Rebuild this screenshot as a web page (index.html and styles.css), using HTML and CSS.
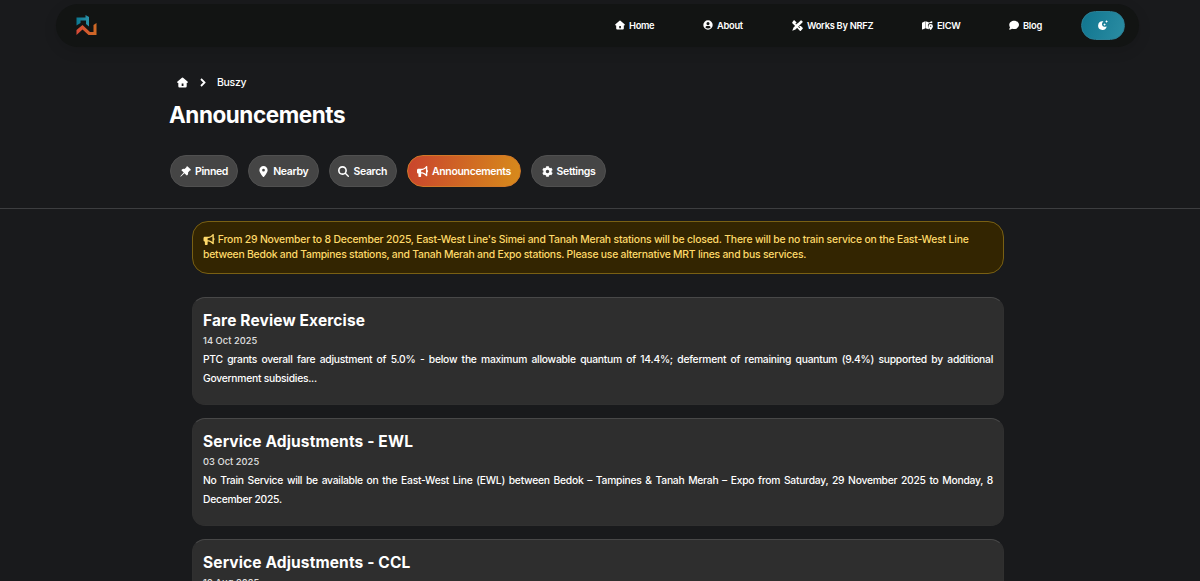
FILE: index.html
```
<!DOCTYPE html>
<html lang="en">
<head>
    <meta charset="UTF-8">
    <meta name="viewport" content="width=device-width, initial-scale=1.0">
    <title>Announcements - Buszy</title>
    <link rel="stylesheet" href="styles.css">
</head>
<body>
    <svg class="sprite" aria-hidden="true">
        <symbol id="home" viewBox="0 0 16 16"><path fill-rule="evenodd" d="M7.2 1.2a1.3 1.3 0 0 1 1.6 0l6.5 5.5c.9.8.4 1.9-.7 1.9h-.5v5a1.7 1.7 0 0 1-1.7 1.7H3.6a1.7 1.7 0 0 1-1.7-1.7v-5h-.5C.3 8.6-.2 7.5.7 6.7zM6.8 9.5V13h2.6V9.5z"/></symbol>
        <symbol id="user" viewBox="0 0 16 16"><path fill-rule="evenodd" d="M8 .5a7.5 7.5 0 1 0 0 15 7.5 7.5 0 0 0 0-15zM8 3.2a2.5 2.5 0 1 1 0 5 2.5 2.5 0 0 1 0-5zM3.7 11.5c.6-1.3 1.7-2 3.1-2h2.4c1.4 0 2.5.7 3.1 2A5.7 5.7 0 0 1 8 13.4a5.7 5.7 0 0 1-4.3-1.9z"/></symbol>
        <symbol id="works" viewBox="0 0 16 16"><path d="M3.5.4 6.7 3.6 4.9 5.4l1 1 1.8-1.8.9.9L5 9.1.5 4.6c-.5-.5-.5-1 0-1.5L2.6.4q.4-.4.9 0zM12.6.6q.6-.5 1.2 0l1.6 1.6q.5.6 0 1.2L5.1 13.7.4 15.5l1.8-4.6zM11 6.9l4.5 4.5c.5.5.5 1 0 1.5l-2.6 2.6c-.5.5-1 .5-1.5 0L7.3 11.3l1.5-1.5 2 2 1-1-2-2z"/></symbol>
        <symbol id="map" viewBox="0 0 18 16"><path fill-rule="evenodd" d="M0 3.3 5 1.2v11.6L.7 14.7q-.7.2-.7-.5zM5.6 1.2l5.6 1.5v2.1q-2.2 1.7-1.5 4.6l1.5 2.5v2.3l-5.6-1.5zM11.8 2.7l4.3-1.5q.7-.2.7.5v2.6q-2.1-1-5 .1zM14.2 5.4a3.7 3.7 0 0 1 3.7 3.7c0 2-2.4 4.9-3.2 6q-.5.6-1 0c-.8-1.1-3.2-4-3.2-6a3.7 3.7 0 0 1 3.7-3.7zm0 2.7a1 1 0 1 0 0 2 1 1 0 0 0 0-2z"/></symbol>
        <symbol id="chat" viewBox="0 0 16 16"><path d="M8.2 1C12.5 1 16 3.9 16 7.7s-3.5 6.7-7.8 6.7c-1.2 0-2.3-.2-3.3-.6-1 .8-2.7 1.4-4.4 1.4-.5 0-.6-.5-.3-.8.7-.8 1.3-1.9 1.4-2.8A6.2 6.2 0 0 1 .4 7.7C.4 3.9 3.9 1 8.2 1z"/></symbol>
        <symbol id="moon" viewBox="0 0 16 16"><path d="M8.3 2.6C6.3 4 5.8 6.6 7 8.7c1.4 2.3 4.2 2.8 6.2 1.8.4-.2.7.2.5.6a6.9 6.9 0 1 1-6-9c.7 0 1 .3.6.5zM10.5 5l.7 1.5 1.5.7-1.5.7-.7 1.5-.7-1.5-1.5-.7 1.5-.7zM13.7 0l.7 1.6 1.6.7-1.6.7-.7 1.6-.7-1.6-1.6-.7 1.6-.7z"/></symbol>
        <symbol id="pin" viewBox="0 0 16 16"><path d="M9.6.7q.7-.9 1.5-.1l4.3 4.3q.8.8-.1 1.5l-1 .3-2.6 2.6c.4 1.6 0 3.1-1.2 4.3q-.5.4-1 0L6.4 10.5l-4.6 4.4-1.6.9.9-1.6 4.4-4.6-3.1-3.1q-.4-.5 0-1C3.6 4.3 5.1 3.9 6.7 4.3l2.6-2.6z"/></symbol>
        <symbol id="location" viewBox="0 0 384 512"><path d="M215.7 499.2C267 435 384 279.4 384 192C384 86 298 0 192 0S0 86 0 192c0 87.4 117 243 168.3 307.2c12.3 15.3 35.1 15.3 47.4 0zM192 128a64 64 0 1 1 0 128 64 64 0 1 1 0-128z"/></symbol>
        <symbol id="search" viewBox="0 0 512 512"><path d="M416 208c0 45.9-14.9 88.3-40 122.7L502.6 457.4c12.5 12.5 12.5 32.8 0 45.3s-32.8 12.5-45.3 0L330.7 376c-34.4 25.2-76.8 40-122.7 40C93.1 416 0 322.9 0 208S93.1 0 208 0S416 93.1 416 208zM208 340a132 132 0 1 0 0-264 132 132 0 1 0 0 264z"/></symbol>
        <symbol id="bullhorn" viewBox="0 0 512 512"><path d="M480 32c0-12.9-7.8-24.6-19.8-29.6s-25.7-2.2-34.9 6.9L381.7 53c-48 48-113.1 75-181 75H64c-35.3 0-64 28.7-64 64v96c0 35.3 28.7 64 64 64v128c0 17.7 14.3 32 32 32h64c17.7 0 32-14.3 32-32V352h8.7c67.9 0 133 27 181 75l43.6 43.6c9.2 9.2 22.9 11.9 34.9 6.9s19.8-16.6 19.8-29.6V300.4c18.6-8.8 32-32.5 32-60.4s-13.4-51.6-32-60.4V32zm-64 76.7v262.6C357.2 317.8 280.5 288 200.7 288H192V192h8.7c79.8 0 156.5-29.8 215.3-83.3z"/></symbol>
        <symbol id="gear" viewBox="0 0 512 512"><path d="M487.4 315.7l-42.6-24.6c4.3-23.2 4.3-47 0-70.2l42.6-24.6c4.9-2.8 7.1-8.6 5.5-14-11.1-35.6-30-67.8-54.7-94.6-3.8-4.1-10-5.1-14.8-2.3L380.8 110c-17.9-15.4-38.5-27.3-60.8-35.1V25.8c0-5.6-3.9-10.5-9.4-11.7-36.7-8.2-74.3-7.8-109.2 0-5.5 1.2-9.4 6.1-9.4 11.7V75c-22.2 7.9-42.8 19.8-60.8 35.1L88.7 85.5c-4.9-2.8-11-1.9-14.8 2.3-24.7 26.7-43.6 58.9-54.7 94.6-1.7 5.4.6 11.2 5.5 14L67.3 221c-4.3 23.2-4.3 47 0 70.2l-42.6 24.6c-4.9 2.8-7.1 8.6-5.5 14 11.1 35.6 30 67.8 54.7 94.6 3.8 4.1 10 5.1 14.8 2.3l42.6-24.6c17.9 15.4 38.5 27.3 60.8 35.1v49.2c0 5.6 3.9 10.5 9.4 11.7 36.7 8.2 74.3 7.8 109.2 0 5.5-1.2 9.4-6.1 9.4-11.7v-49.2c22.2-7.9 42.8-19.8 60.8-35.1l42.6 24.6c4.9 2.8 11 1.9 14.8-2.3 24.7-26.7 43.6-58.9 54.7-94.6 1.5-5.5-.7-11.3-5.6-14.1zM256 336c-44.1 0-80-35.9-80-80s35.9-80 80-80 80 35.9 80 80-35.9 80-80 80z"/></symbol>
    </svg>

    <nav class="navbar">
        <a class="brand" href="#">
            <svg class="logo" viewBox="0 0 20 21">
                <defs>
                    <linearGradient id="blue"><stop stop-color="#0b7891"/><stop offset="1" stop-color="#2b91a8"/></linearGradient>
                    <linearGradient id="orange"><stop stop-color="#d84a38"/><stop offset="1" stop-color="#cd6a24"/></linearGradient>
                </defs>
                <path fill="url(#blue)" d="M0 10.5v-8h9V0l3.5 2v9.500L9.500 9V5.500H4v2.500z"/>
                <path fill="url(#orange)" d="M0 15l6-5 7.500 7H17v-7l3-2v12h-8l-6-5.500L0 20z"/>
            </svg>
        </a>
        <div class="nav-links">
            <a class="nav-link home-link" href="#"><svg class="icon"><use href="#home"/></svg>Home</a>
            <a class="nav-link about-link" href="#"><svg class="icon"><use href="#user"/></svg>About</a>
            <a class="nav-link works-link" href="#"><svg class="icon"><use href="#works"/></svg>Works By NRFZ</a>
            <a class="nav-link eicw-link" href="#"><svg class="icon"><use href="#map"/></svg>EICW</a>
            <a class="nav-link blog-link" href="#"><svg class="icon"><use href="#chat"/></svg>Blog</a>
            <button class="theme-btn" aria-label="Theme"><svg class="icon"><use href="#moon"/></svg></button>
        </div>
    </nav>

    <header class="page-header">
        <div class="breadcrumb">
            <svg class="icon"><use href="#home"/></svg>
            <svg class="chevron" viewBox="0 0 6 9"><path d="M1 1l3.5 3.5L1 8"/></svg>
            <span>Buszy</span>
        </div>
        <h1>Announcements</h1>
        <div class="tabs">
            <button class="tab pinned"><svg class="icon"><use href="#pin"/></svg><span>Pinned</span></button>
            <button class="tab nearby"><svg class="icon"><use href="#location"/></svg><span>Nearby</span></button>
            <button class="tab search"><svg class="icon"><use href="#search"/></svg><span>Search</span></button>
            <button class="tab news active"><svg class="icon"><use href="#bullhorn"/></svg><span>Announcements</span></button>
            <button class="tab settings"><svg class="icon"><use href="#gear"/></svg><span>Settings</span></button>
        </div>
    </header>

    <main class="content">
        <div class="alert">
            <svg class="icon"><use href="#bullhorn"/></svg>
            <span class="line-one">From 29 November to 8 December 2025, East-West Line's Simei and Tanah Merah stations will be closed. There will be no train service on the East-West Line</span><br>
            <span class="line-two">between Bedok and Tampines stations, and Tanah Merah and Expo stations. Please use alternative MRT lines and bus services.</span>
        </div>
        <article class="card">
            <h2>Fare Review Exercise</h2>
            <time>14 Oct 2025</time>
            <p>PTC grants overall fare adjustment of 5.0% - below the maximum allowable quantum of 14.4%; deferment of remaining quantum (9.4%) supported by additional Government subsidies...</p>
        </article>
        <article class="card">
            <h2>Service Adjustments - EWL</h2>
            <time>03 Oct 2025</time>
            <p>No Train Service will be available on the East-West Line (EWL) between Bedok – Tampines &amp; Tanah Merah – Expo from Saturday, 29 November 2025 to Monday, 8 December 2025.</p>
        </article>
        <article class="card">
            <h2>Service Adjustments - CCL</h2>
            <time>19 Aug 2025</time>
        </article>
    </main>
</body>
</html>
```
FILE: styles.css
```
* {
    box-sizing: border-box;
}
body {
    margin: 0;
    height: 581px;
    overflow: hidden;
    background: #191a1c;
    color: #fff;
    font-family: Inter, "Liberation Sans", sans-serif;
}
.sprite {
    display: none;
}
.icon {
    width: 10px;
    height: 10px;
    fill: currentColor;
    flex: none;
}
.navbar {
    display: flex;
    align-items: center;
    justify-content: space-between;
    width: 1083px;
    height: 43px;
    margin: 4px 0 0 56px;
    padding: 0 14px 1px 20px;
    border-radius: 22px;
    background: #121413;
    box-shadow: 0 4px 14px rgba(0,0,0,0.12);
}
.brand {
    display: flex;
}
.logo {
    width: 21px;
    height: 21px;
}
.nav-links {
    display: flex;
    align-items: center;
}
.nav-link {
    display: flex;
    align-items: center;
    gap: 4px;
    color: #fff;
    font-size: 9.3px;
    font-weight: 600;
    letter-spacing: -0.28px;
    text-decoration: none;
    white-space: nowrap;
}
.home-link {
    width: 88px;
}
.about-link {
    width: 89px;
}
.works-link {
    width: 130px;
}
.eicw-link {
    width: 87px;
}
.works-link .icon,
.eicw-link .icon {
    width: 11px;
    height: 11px;
}
.blog-link {
    width: 72px;
}
.theme-btn {
    display: flex;
    align-items: center;
    justify-content: center;
    width: 44px;
    height: 29px;
    padding: 0;
    border: 1px solid #2b8096;
    border-radius: 15px;
    color: #fff;
    background: linear-gradient(110deg, #10758f, #2b8da3);
}
.page-header {
    height: 162px;
    padding: 29px 0 0 170px;
    border-bottom: 1px solid #3d3e40;
}
.breadcrumb {
    display: flex;
    align-items: center;
    height: 13px;
    padding-left: 7px;
    font-size: 10.5px;
    font-weight: 500;
    letter-spacing: -0.3px;
}
.breadcrumb .icon {
    width: 11px;
    height: 11px;
}
.chevron {
    width: 6px;
    height: 9px;
    margin: 0 11px 0 12px;
    fill: none;
    stroke: #fff;
    stroke-width: 1.8;
}
h1 {
    margin: 12px 0 0 -1px;
    font-size: 22.5px;
    line-height: 28px;
    letter-spacing: -0.45px;
}
.tabs {
    display: flex;
    gap: 10px;
    margin-top: 26px;
}
.tab {
    display: flex;
    align-items: center;
    justify-content: center;
    gap: 4px;
    width: 68px;
    height: 32px;
    padding: 0;
    border: 1px solid #505050;
    border-radius: 16px;
    background: #454545;
    color: #fff;
    font: 600 10.5px Inter, sans-serif;
    letter-spacing: -0.35px;
}
.tab .icon {
    width: 11px;
    height: 11px;
}
.nearby {
    width: 70.5px;
}
.search {
    width: 68.5px;
}
.news {
    width: 114px;
}
.settings {
    width: 75px;
}
.tab.active {
    border-color: #d17828;
    background: linear-gradient(100deg, #c9442d, #d78b1b);
}
.content {
    width: 812px;
    margin: 12px 0 0 192px;
}
.alert {
    height: 53px;
    padding: 10px;
    border: 1px solid #796013;
    border-radius: 16px;
    background: #332501;
    color: #ffda6a;
    font-size: 10.4px;
    font-weight: 500;
    line-height: 15px;
    white-space: nowrap;
    margin-bottom: 23px;
}
.alert .icon {
    width: 12px;
    height: 11px;
    vertical-align: -2px;
}
.line-one {
    letter-spacing: -0.19px;
}
.line-two {
    letter-spacing: -0.235px;
}
.card {
    height: 108px;
    margin-bottom: 13px;
    padding: 14px 10px 0;
    border: 1px solid #303030;
    border-top-color: #484848;
    border-radius: 13px;
    background: #2e2e2e;
}
h2 {
    margin: 0;
    font-size: 15.5px;
    line-height: 18px;
    letter-spacing: 0.13px;
}
time {
    display: block;
    margin-top: 4px;
    color: #e0e0e0;
    font-size: 9.3px;
    font-weight: 500;
    line-height: 14px;
    letter-spacing: 0.05px;
}
.card p {
    margin: 2px 0 0;
    font-size: 10.3px;
    font-weight: 500;
    line-height: 19px;
    letter-spacing: -0.25px;
    text-align: justify;
}
```
